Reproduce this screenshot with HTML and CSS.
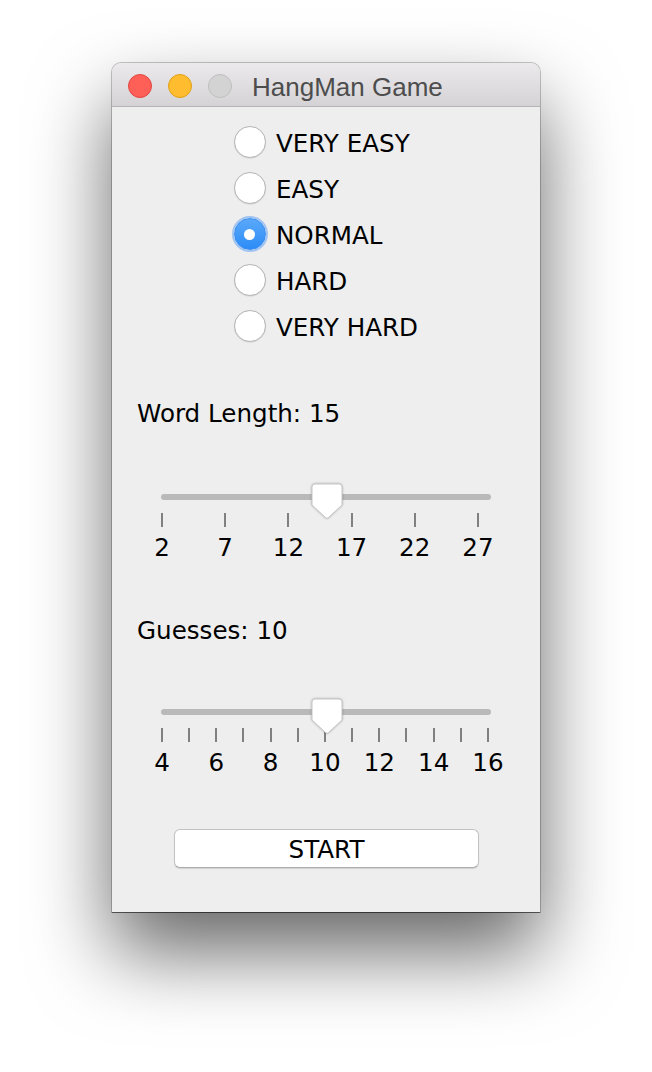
FILE: index.html
```html
<!DOCTYPE html>
<html>
<head>
<meta charset="utf-8">
<link rel="stylesheet" href="styles.css">
</head>
<body>
<div class="window">
  <div class="titlebar">
    <span class="light red"></span>
    <span class="light yellow"></span>
    <span class="light gray"></span>
    <span class="title">HangMan Game</span>
  </div>
  <div class="content">
    <div class="radios">
      <div class="radio"><span class="dot"></span><span class="radio-text">VERY EASY</span></div>
      <div class="radio"><span class="dot"></span><span class="radio-text">EASY</span></div>
      <div class="radio"><span class="dot selected"></span><span class="radio-text">NORMAL</span></div>
      <div class="radio"><span class="dot"></span><span class="radio-text">HARD</span></div>
      <div class="radio"><span class="dot"></span><span class="radio-text">VERY HARD</span></div>
    </div>

    <div class="field-label label-word">Word Length: 15</div>
    <div class="slider slider-word">
      <svg class="thumb" style="left:150px" width="32" height="36" viewBox="0 0 32 36"><path d="M4,1 H28 Q31,1 31,4 V22 L17.2,34.8 Q16,35.8 14.8,34.8 L1,22 V4 Q1,1 4,1 Z"/></svg>
      <div class="track"></div>
      <div class="ticks ticks-word">
        <span class="tick"></span><span class="tick"></span><span class="tick"></span><span class="tick"></span><span class="tick"></span><span class="tick"></span>
      </div>
      <div class="tick-labels ticks-word">
        <span class="num">2</span><span class="num">7</span><span class="num">12</span><span class="num">17</span><span class="num">22</span><span class="num">27</span>
      </div>
    </div>

    <div class="field-label label-guess">Guesses: 10</div>
    <div class="slider slider-guess">
      <svg class="thumb" style="left:150px" width="32" height="36" viewBox="0 0 32 36"><path d="M4,1 H28 Q31,1 31,4 V22 L17.2,34.8 Q16,35.8 14.8,34.8 L1,22 V4 Q1,1 4,1 Z"/></svg>
      <div class="track"></div>
      <div class="ticks ticks-guess">
        <span class="tick"></span><span class="tick"></span><span class="tick"></span><span class="tick"></span><span class="tick"></span><span class="tick"></span><span class="tick"></span><span class="tick"></span><span class="tick"></span><span class="tick"></span><span class="tick"></span><span class="tick"></span><span class="tick"></span>
      </div>
      <div class="tick-labels ticks-guess">
        <span class="num">4</span><span class="num">6</span><span class="num">8</span><span class="num">10</span><span class="num">12</span><span class="num">14</span><span class="num">16</span>
      </div>
    </div>

    <button class="start">START</button>
  </div>
</div>
</body>
</html>
```

FILE: styles.css
```css
html, body {
  margin: 0;
  padding: 0;
  background: #ffffff;
}
body {
  width: 652px;
  height: 1072px;
  display: flex;
  justify-content: center;
  align-items: flex-start;
  overflow: hidden;
  font-family: "DejaVu Sans", "Noto Sans", sans-serif;
}
.window {
  margin-top: 63px;
  width: 428px;
  height: 849px;
  display: flex;
  flex-direction: column;
  background: #eeeeee;
  border-radius: 9px 9px 0 0;
  box-shadow: 0 0 0 1px rgba(0, 0, 0, 0.22), 0 1px 0 0 rgba(0, 0, 0, 0.45), 0 40px 80px 0 rgba(0, 0, 0, 0.6);
  overflow: hidden;
}
.titlebar {
  height: 40px;
  padding-top: 3px;
  padding-left: 16px;
  display: flex;
  align-items: center;
  gap: 16px;
  background: linear-gradient(#ebe9eb, #d5d3d5);
  border-bottom: 1px solid #b4b4b4;
  flex: none;
}
.light {
  width: 22px;
  height: 22px;
  border-radius: 50%;
  flex: none;
}
.red {
  background: #fe5f57;
  border: 1px solid #e2463f;
}
.yellow {
  background: #febc2e;
  border: 1px solid #e1a116;
}
.gray {
  background: #d3d3d3;
  border: 1px solid #bfbfbf;
}
.title {
  align-self: flex-start;
  margin-top: 6px;
  margin-left: 4px;
  font-family: "Liberation Sans", Arial, sans-serif;
  font-size: 26px;
  line-height: 30px;
  color: #4d4d4d;
}
.content {
  flex: 1;
  display: flex;
  flex-direction: column;
  padding-top: 12px;
}
.radios {
  align-self: center;
  display: flex;
  flex-direction: column;
}
.radio {
  height: 46px;
  display: flex;
  align-items: center;
  gap: 10px;
}
.radio-text {
  margin-top: 4px;
}
.dot {
  box-sizing: border-box;
  width: 32px;
  height: 32px;
  border-radius: 50%;
  background: #ffffff;
  border: 1px solid #b5b5b5;
  box-shadow: 0 0.5px 1px rgba(0, 0, 0, 0.12);
  display: flex;
  align-items: center;
  justify-content: center;
  flex: none;
}
.dot.selected {
  background: linear-gradient(#5aa9fb, #2c8cf6);
  border: 1px solid #3a8ef0;
  box-shadow: 0 0 0 2px rgba(94, 160, 245, 0.55);
}
.dot.selected::after {
  content: "";
  width: 11px;
  height: 11px;
  border-radius: 50%;
  background: #ffffff;
}
.radio-text, .field-label, .num, .start {
  font-size: 24.6px;
  line-height: 28px;
  color: #000000;
}
.field-label {
  margin-left: 25px;
}
.label-word {
  margin-top: 51px;
}
.label-guess {
  margin-top: 55px;
}
.slider {
  position: relative;
  margin-left: 49px;
  width: 332px;
}
.slider-word {
  margin-top: 56px;
}
.slider-guess {
  margin-top: 54px;
}
.thumb {
  position: absolute;
  top: -1px;
  z-index: 2;
  filter: drop-shadow(0 0.6px 1px rgba(0, 0, 0, 0.28));
}
.thumb path {
  fill: #ffffff;
  stroke: #c6c6c6;
  stroke-width: 1;
}
.track {
  margin-top: 10px;
  width: 330px;
  height: 6px;
  border-radius: 3px;
  background: #b9b9b9;
}
.ticks {
  margin-top: 13px;
  display: flex;
  justify-content: space-between;
}
.ticks-word {
  width: 318px;
}
.ticks-guess {
  width: 328px;
}
.tick {
  width: 2px;
  height: 14px;
  background: #808080;
}
.tick-labels {
  margin-top: 7px;
  display: flex;
  justify-content: space-between;
}
.num {
  width: 2px;
  display: flex;
  justify-content: center;
  white-space: nowrap;
}
.start {
  margin-top: 52px;
  align-self: flex-start;
  margin-left: 62px;
  width: 305px;
  height: 39px;
  padding: 2px 0 0;
  box-sizing: border-box;
  background: #ffffff;
  border: 1px solid #c3c3c3;
  border-bottom-color: #acacac;
  border-radius: 6px;
  box-shadow: 0 1px 1px rgba(0, 0, 0, 0.12);
  font-family: "DejaVu Sans", "Noto Sans", sans-serif;
  line-height: 35px;
}
```
